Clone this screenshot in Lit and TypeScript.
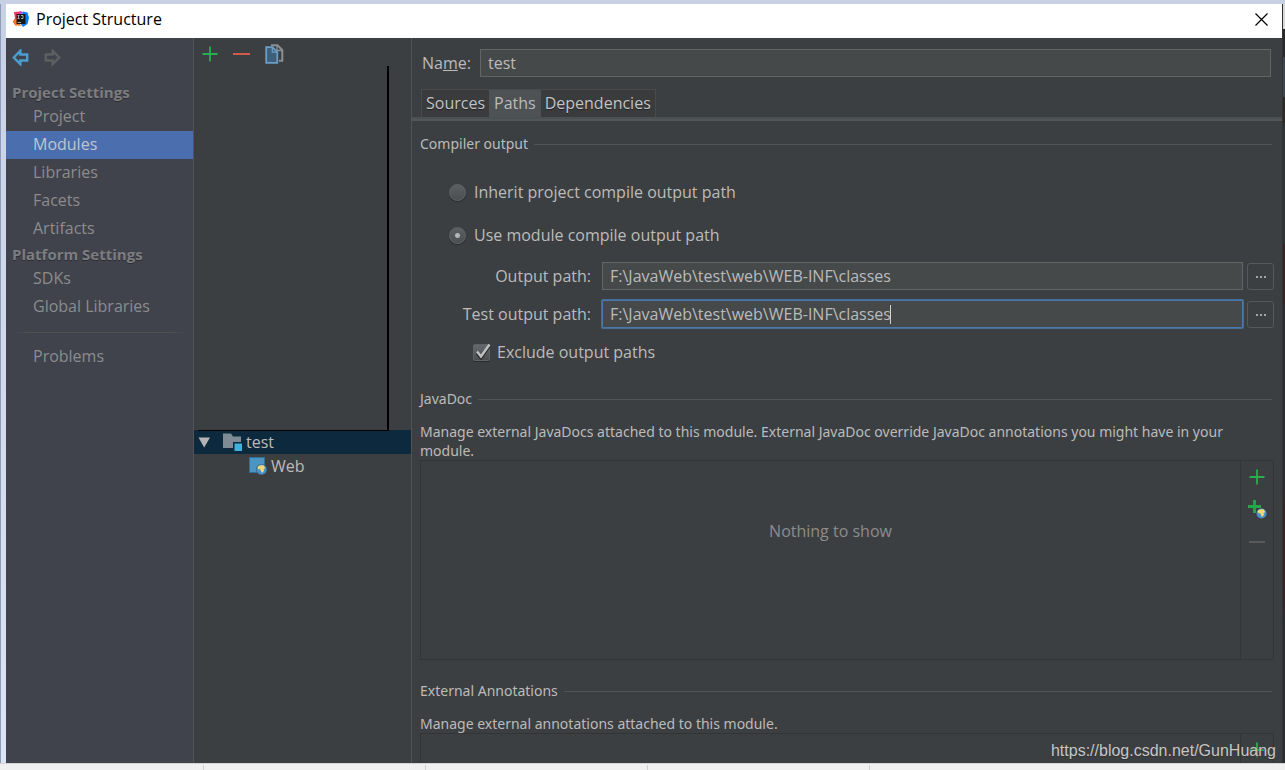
import { LitElement, html, css, svg } from "lit";
import { customElement, state } from "lit/decorators.js";

const plusIcon = html`<svg width="16" height="16" viewBox="0 0 16 16" aria-hidden="true">
  <path d="M8 0.5V15.5M0.5 8H15.5" stroke="#23b14d" stroke-width="1.8" fill="none" />
</svg>`;

const globe = svg`
  <circle cx="0" cy="0" r="5" fill="#4a90cf" />
  <path d="M-4-2C-3-4 0-4.600 2.500-3.800L3.600-1.500 2 0 2.600 1.200 0.500 3.600-0.600 1.500-1.200-0.200-3-0.200Z" fill="#f5da6b" />
`;

const plusGlobeIcon = html`<svg width="20" height="20" viewBox="0 0 20 20" aria-hidden="true">
  <path d="M7.500 0V13M1 6.500H14" stroke="#23a845" stroke-width="2.800" fill="none" />
  <circle cx="14.500" cy="13.500" r="5.600" fill="#3c3f41" />
  <g transform="translate(14.500 13.500)">${globe}</g>
</svg>`;

const arrow = (color: string, flip: boolean) => html`<svg width="17" height="17" viewBox="0 0 17 17" aria-hidden="true">
  <path
    d="M1.800 8.500L8.300 1.800V5.500H15.200V11.500H8.300V15.200Z"
    transform=${flip ? "translate(17 0) scale(-1 1)" : ""}
    stroke=${color} stroke-width="2.400" fill="none" />
</svg>`;

const copyIcon = html`<svg width="19" height="20" viewBox="0 0 19 20" aria-hidden="true">
  <path d="M6 1.200H12.500L17.300 6V16.800H14" fill="none" stroke="#8b8f92" stroke-width="2" />
  <path d="M12 1V6.500H17" fill="none" stroke="#8b8f92" stroke-width="1.300" />
  <path d="M1.200 3.200H7.500L12.300 8V18.800H1.200Z" fill="#3f5f78" stroke="#6a9ec6" stroke-width="1.800" />
  <path d="M7.300 3.500V8.200H12" fill="none" stroke="#6a9ec6" stroke-width="1.300" />
</svg>`;

const appIcon = html`<svg width="16" height="16" viewBox="0 0 16 16" aria-hidden="true">
  <path d="M1 1L7 0.500 8 8 3 15 0 11 2 7Z" fill="#fe315d" />
  <path d="M0 10L4 7 8 15 2 14Z" fill="#f97a12" />
  <path d="M7 0L10 1 9 5 5 4Z" fill="#b24ae0" />
  <path d="M10 0.500L14.500 1.500 16 7 14.500 13 10 16 7 12Z" fill="#087cfa" />
  <rect x="3.500" y="3" width="9" height="10" fill="#181818" />
  <path d="M4.500 4.500H6.500M5.500 4.500V7.500M4.500 7.500H6.500M8 4.500H10V7.500H8M4.500 11.500H8" stroke="#b8b8b8" stroke-width="0.900" fill="none" />
</svg>`;

const moduleIcon = html`<svg width="20" height="18" viewBox="0 0 20 18" aria-hidden="true">
  <path d="M0 0.500H8L10 3.500H18V15H0Z" fill="#7f8b94" />
  <rect x="10" y="9" width="10" height="9" fill="#0d293e" />
  <rect x="11.500" y="10.500" width="7.500" height="7.500" fill="#40b1dc" />
</svg>`;

const webIcon = html`<svg width="18" height="18" viewBox="0 0 18 18" aria-hidden="true">
  <rect x="0.500" y="0.500" width="15" height="15" fill="#4c94c2" stroke="#356e93" />
  <circle cx="12.500" cy="12.500" r="5.500" fill="#3c5f7a" />
  <g transform="translate(12.500 12.500)">${globe}</g>
</svg>`;

@customElement("app-root")
export class AppRoot extends LitElement {
  @state() private section = "Modules";
  @state() private tab = "Paths";

  static styles = css`
    :host {
      display: grid;
      grid-template: 4px minmax(0, 1fr) 7px / 6px minmax(0, 1fr) 3px;
      height: 100vh;
      overflow: hidden;
      position: relative;
      background: #c8d0e4;
      color: #bbbbbb;
      font: 16px/20px "Open Sans", "Noto Sans", sans-serif;
    }
    * { box-sizing: border-box; }
    svg { display: block; flex: none; }
    button, input { font: inherit; color: inherit; margin: 0; }
    button { background: none; border: 0; padding: 0; display: flex; align-items: center; justify-content: center; }
    h2, h3, p, ul { margin: 0; padding: 0; font: inherit; }
    ul { list-style: none; }

    .edge { grid-area: 2 / 1; border-left: 1px solid #8f9dbd; background: linear-gradient(#c8d0e4, #dde5f2); }
    .behind {
      grid-area: 2 / 3;
      border-left: 1px solid #303234;
      background: linear-gradient(#d8d8d8 0 25px, #2b2b2b 25px 53px, #3c4650 53px 93px, #2e2a26 93px 120px, #2f3436 120px 240px, #3a2320 240px 300px, #2b2d30 300px 480px, #3d2222 520px 580px, #2b2d30 620px);
    }
    .strip { grid-area: 3 / 1 / 4 / 4; display: flex; background: #f0f0f0; border-top: 1px solid #d5d5d5; padding-top: 1px; }
    .strip-cell { width: 222px; border-right: 1px solid #d0d0d0; }
    .strip-cell.first { width: 204px; }

    .window { grid-area: 2 / 2; display: flex; flex-direction: column; background: #3c3f41; min-height: 0; overflow: hidden; }
    .titlebar { flex: none; height: 34px; display: flex; align-items: center; gap: 7px; padding: 0 14px 4px 7px; background: #fff; color: #000; }
    .title { flex: 1; }
    .body { flex: 1; min-height: 0; display: grid; grid-template-columns: 188px 218px minmax(0, 1fr); }

    .sidebar { background: #40434c; border-right: 1px solid #515355; color: #8c8c8c; }
    .history { display: flex; gap: 15px; padding: 11px 6px 0; height: 43px; align-items: flex-start; }
    .group { height: 22px; padding-left: 6px; font-size: 15px; line-height: 22px; font-weight: 700; color: #7c7d80; text-shadow: 0 1px 0 #2c2e33; }
    .nav-link { display: block; height: 28px; line-height: 27px; padding-left: 27px; color: inherit; text-decoration: none; }
    .nav-link.active { background: #4b6eaf; color: #bfc5d0; }
    .rule { height: 1px; margin: 11px 6px 10px; background: linear-gradient(90deg, transparent, #515355 12%, #515355 88%, transparent); }

    .modules { display: flex; flex-direction: column; border-right: 1px solid #515355; }
    .toolbar { height: 28px; display: flex; align-items: center; gap: 15px; padding: 4px 8px 0; }
    .blank { height: 365px; margin: 0 22px -1px 4px; border: solid #000; border-width: 0 2px 1px 0; position: relative; }
    .tree-row { height: 24px; display: flex; align-items: center; }
    .tree-row.root { gap: 3px; padding-left: 4px; background: #0d293e; }
    .tree-row.child { gap: 4px; padding-left: 55px; }
    .twisty { margin-right: 9px; }

    .detail { min-width: 0; }
    .name-row { display: flex; align-items: center; gap: 9px; padding: 11px 11px 0 10px; }
    .text {
      width: 100%; min-width: 0; height: 28px; padding: 0 7px; display: block;
      background: #45494a; border: 1px solid #646464; border-radius: 0; outline: none;
    }
    .name-row .text { flex: 1; }
    .tabs { display: flex; height: 30px; margin-top: 12px; padding-left: 9px; border-bottom: 2px solid #4b5052; }
    .tab { height: 28px; padding: 0 4px 1px; border: 1px solid #4a4a4a; border-width: 1px 0 0; background: #393b3d; color: #c4c4c4; text-shadow: 0 1px 0 #222; }
    .tab.first { border-left-width: 1px; }
    .tab.last { border-right-width: 1px; }
    .tab.active { padding: 0 5px 1px; background: #4e5254; color: #bbbbbb; text-shadow: none; }
    .tabs-base { height: 2px; background: #515658; }

    .content { padding: 0 8px; }
    .section { display: flex; align-items: center; gap: 6px; height: 20px; padding-right: 2px; }
    .section::after { content: ""; flex: 1; height: 1px; background: #515355; }
    .heading, .note { font-family: "Noto Sans", sans-serif; font-size: 14px; }
    .compiler { margin-top: 13px; }

    .radio-row { display: flex; align-items: center; gap: 8px; height: 20px; padding-left: 29px; }
    .radio-row.one { margin-top: 28px; }
    .radio-row.two { margin-top: 23px; }
    .radio {
      appearance: none; width: 17px; height: 17px; border-radius: 50%; border: 1px solid #606365;
      background: linear-gradient(#5c5f61, #4c4f51); box-shadow: 0 1px 1px #2b2b2b;
    }
    .radio:checked { background: radial-gradient(circle, #b4b4b4 0 2px, transparent 3px), linear-gradient(#5c5f61, #4c4f51); }

    .paths { display: grid; grid-template-columns: 171px minmax(0, 1fr) 27px; column-gap: 4px; row-gap: 10px; align-items: center; margin-top: 17px; }
    .path-label { text-align: right; }
    .field { position: relative; padding-left: 7px; }
    .field.focused .text { border-color: #4a78ae; box-shadow: 0 0 0 1px #466d94; border-radius: 1px; }
    .caret { position: absolute; left: 295px; top: 5px; width: 1px; height: 19px; background: #d0d0d0; }
    .browse { width: 27px; height: 27px; margin-top: 1px; border: 1px solid #56595b; border-radius: 3px; gap: 2px; }
    .dot { width: 2px; height: 2px; background: #a5a5a5; }

    .check-row { display: flex; align-items: center; gap: 7px; height: 20px; margin-top: 14px; padding-left: 53px; }
    .check-box { display: grid; }
    .check, .tick { grid-area: 1 / 1; }
    .check { appearance: none; width: 17px; height: 17px; border: 1px solid #606365; border-radius: 2px; background: linear-gradient(#66696b, #4a4d4f); box-shadow: 0 1px 0 #2b2b2b; }
    .tick { pointer-events: none; position: relative; }

    .javadoc { margin-top: 27px; }
    .note { line-height: 19px; }
    .javadoc-note { margin-top: 13px; }
    .listbox { display: grid; grid-template-columns: minmax(0, 1fr) 33px; height: 200px; border: 1px solid #323436; }
    .empty { padding-top: 60px; text-align: center; color: #8c8c8c; }
    .side { border-left: 1px solid #323436; display: flex; flex-direction: column; align-items: center; gap: 15px; padding-top: 8px; }
    .annotations { margin-top: 21px; }
    .annotations-note { margin-top: 13px; }

    .watermark { position: absolute; right: 9px; bottom: 9px; font: 16px/20px "Liberation Sans", sans-serif; color: #c6c6c6; text-shadow: 0 1px 1px #333; }
  `;

  private navLink(name: string) {
    return html`<li><a class="nav-link ${this.section === name ? "active" : ""}" href="#"
      @click=${(e: Event) => { e.preventDefault(); this.section = name; }}>${name}</a></li>`;
  }

  private tabButton(name: string, extra = "") {
    return html`<button role="tab" aria-selected=${this.tab === name}
      class="tab ${extra} ${this.tab === name ? "active" : ""}"
      @click=${() => { this.tab = name; }}>${name}</button>`;
  }

  private browse(label: string) {
    return html`<button class="browse" aria-label=${label}>
      <span class="dot"></span><span class="dot"></span><span class="dot"></span>
    </button>`;
  }

  render() {
    return html`
      <div class="edge"></div>
      <div class="window">
        <header class="titlebar">
          ${appIcon}
          <span class="title">Project Structure</span>
          <button aria-label="Close">
            <svg width="13" height="13" viewBox="0 0 13 13"><path d="M0.500 0.500L12.500 12.500M12.500 0.500L0.500 12.500" stroke="#000" stroke-width="1.200" /></svg>
          </button>
        </header>
        <div class="body">
          <nav class="sidebar">
            <div class="history">
              <button aria-label="Back">${arrow("#4a9fd0", false)}</button>
              <button aria-label="Forward">${arrow("#5e5f60", true)}</button>
            </div>
            <h2 class="group">Project Settings</h2>
            <ul>${["Project", "Modules", "Libraries", "Facets", "Artifacts"].map((n) => this.navLink(n))}</ul>
            <h2 class="group">Platform Settings</h2>
            <ul>${["SDKs", "Global Libraries"].map((n) => this.navLink(n))}</ul>
            <div class="rule"></div>
            <ul>${this.navLink("Problems")}</ul>
          </nav>

          <section class="modules">
            <div class="toolbar">
              <button aria-label="Add">${plusIcon}</button>
              <button aria-label="Remove">
                <svg width="17" height="16" viewBox="0 0 17 16"><path d="M0 8H17" stroke="#cf5b4c" stroke-width="2" /></svg>
              </button>
              <button aria-label="Copy">${copyIcon}</button>
            </div>
            <div class="blank"></div>
            <div class="tree-row root">
              <svg class="twisty" width="13" height="11" viewBox="0 0 13 11"><path d="M0.500 0.500H12L6.200 10.500Z" fill="#b4b4b4" /></svg>
              ${moduleIcon}<span>test</span>
            </div>
            <div class="tree-row child">${webIcon}<span>Web</span></div>
          </section>

          <main class="detail">
            <div class="name-row">
              <label for="name">Na<u>m</u>e:</label>
              <input class="text" id="name" type="text" .value=${"test"} />
            </div>
            <div class="tabs" role="tablist">
              ${this.tabButton("Sources", "first")}${this.tabButton("Paths")}${this.tabButton("Dependencies", "last")}
            </div>
            <div class="tabs-base"></div>

            <div class="content">
              <div class="section compiler"><h3 class="heading">Compiler output</h3></div>
              <div class="radio-row one">
                <input class="radio" type="radio" name="mode" id="inherit" />
                <label for="inherit">Inherit project compile output path</label>
              </div>
              <div class="radio-row two">
                <input class="radio" type="radio" name="mode" id="own" checked />
                <label for="own">Use module compile output path</label>
              </div>
              <div class="paths">
                <label class="path-label" for="out">Output path:</label>
                <div class="field"><input class="text" id="out" type="text" .value=${"F:\\JavaWeb\\test\\web\\WEB-INF\\classes"} /></div>
                ${this.browse("Browse output path")}
                <label class="path-label" for="test-out">Test output path:</label>
                <div class="field focused">
                  <input class="text" id="test-out" type="text" .value=${"F:\\JavaWeb\\test\\web\\WEB-INF\\classes"} />
                  <span class="caret"></span>
                </div>
                ${this.browse("Browse test output path")}
              </div>
              <div class="check-row">
                <span class="check-box">
                  <input class="check" type="checkbox" id="exclude" checked />
                  <svg class="tick" width="17" height="17" viewBox="0 0 17 17" overflow="visible"><path d="M4 8L8 13L16.500 1" fill="none" stroke="#2b2b2b" stroke-width="3" transform="translate(0 1)" /><path d="M4 7.500L8 12.500L16.500 0.500" fill="none" stroke="#c0c0c0" stroke-width="2.400" /></svg>
                </span>
                <label for="exclude">Exclude output paths</label>
              </div>

              <div class="section javadoc"><h3 class="heading">JavaDoc</h3></div>
              <p class="note javadoc-note">Manage external JavaDocs attached to this module. External JavaDoc override JavaDoc annotations you might have in your module.</p>
              <div class="listbox">
                <div class="empty">Nothing to show</div>
                <div class="side">
                  <button aria-label="Add JavaDoc">${plusIcon}</button>
                  <button aria-label="Add JavaDoc URL">${plusGlobeIcon}</button>
                  <button aria-label="Remove JavaDoc">
                    <svg width="16" height="16" viewBox="0 0 16 16"><path d="M0 7H16" stroke="#5a5a5a" stroke-width="2" /></svg>
                  </button>
                </div>
              </div>

              <div class="section annotations"><h3 class="heading">External Annotations</h3></div>
              <p class="note annotations-note">Manage external annotations attached to this module.</p>
              <div class="listbox">
                <div></div>
                <div class="side"><button aria-label="Add annotations">${plusIcon}</button></div>
              </div>
            </div>
          </main>
        </div>
      </div>
      <div class="behind"></div>
      <div class="strip">
        <div class="strip-cell first"></div><div class="strip-cell"></div><div class="strip-cell"></div><div class="strip-cell"></div>
      </div>
      <div class="watermark">https://blog.csdn.net/GunHuang</div>
    `;
  }
}
